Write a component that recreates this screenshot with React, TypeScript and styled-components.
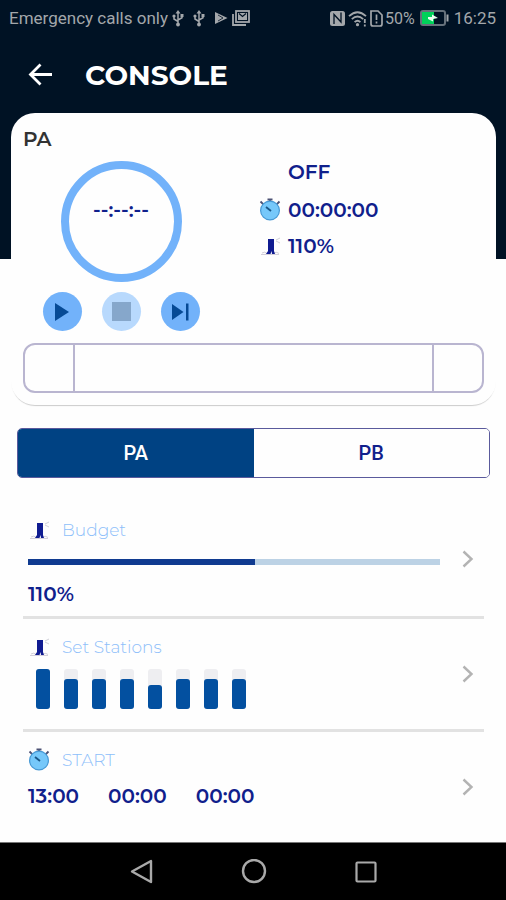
import React, { useState } from "react";
import styled, { createGlobalStyle } from "styled-components";

const color = {
  ink: "#001224",
  status: "#a3a7ab",
  sky: "#72b2fa",
  skyText: "#8ec0fa",
  navy: "#10208c",
  deep: "#004283",
  bar: "#0350a0",
  outline: "#b9b5d0",
  rule: "#e2e2e2",
};

const brandFont = `Montserrat, Inter, "Open Sans", sans-serif`;

const GlobalStyle = createGlobalStyle`
  *, *::before, *::after { box-sizing: border-box; }
  body { margin: 0; background: #fff; font-family: ${brandFont}; }
  button { font: inherit; color: inherit; border: 0; padding: 0; background: none; cursor: pointer; }
  svg { display: block; flex: none; }
`;

const Page = styled.div`
  display: flex;
  flex-direction: column;
  min-height: 100vh;
  background: linear-gradient(${color.ink} 259px, #fefefe 259px);
`;

const StatusBar = styled.div`
  display: flex;
  justify-content: space-between;
  align-items: center;
  height: 36px;
  padding: 0 10px 0 9px;
  color: ${color.status};
  font-family: Roboto, sans-serif;
  font-size: 17px;
`;

const StatusGroup = styled.div<{ $gap: number }>`
  display: flex;
  align-items: center;
  gap: ${(p) => p.$gap}px;
  white-space: nowrap;
`;

const BatteryText = styled.span`
  font-size: 16px;
`;

const AppBar = styled.header`
  display: flex;
  align-items: center;
  gap: 32px;
  height: 77px;
  padding: 0 27px;
  color: #fff;
`;

const Title = styled.h1`
  margin: 0;
  font-size: 28px;
  line-height: 32px;
  font-weight: 700;
`;

const Card = styled.section`
  margin: 0 10px 0 11px;
  padding: 14px 12px 12px;
  border-radius: 24px;
  background: #fefefe;
  box-shadow: 0 2px 1px -1px rgba(0, 0, 0, 0.2);
`;

const CardTitle = styled.h2`
  margin: 0 0 10px;
  color: #333;
  font-size: 20px;
  line-height: 24px;
  font-weight: 600;
`;

const Overview = styled.div`
  display: grid;
  grid-template-columns: 196px 1fr;
  column-gap: 40px;
`;

const Dial = styled.div`
  display: flex;
  justify-content: center;
  justify-self: center;
  width: 121px;
  height: 121px;
  padding-top: 29px;
  border: 8px solid ${color.sky};
  border-radius: 50%;
  color: ${color.navy};
  font-size: 20px;
  line-height: 24px;
  font-weight: 600;
`;

const Readouts = styled.div`
  display: flex;
  flex-direction: column;
  gap: 15px;
`;

const Readout = styled.div`
  display: grid;
  grid-template-columns: 20px 1fr;
  column-gap: 9px;
  align-items: center;
  height: 22px;
  color: ${color.navy};
  font-size: 20px;
  line-height: 22px;
  font-weight: 600;
`;

const ReadoutValue = styled.span`
  grid-column: 2;
`;

const Controls = styled.div`
  display: flex;
  justify-content: center;
  gap: 20px;
  width: 196px;
  margin: 10px 0 12px;
`;

const RoundButton = styled.button`
  display: grid;
  place-items: center;
  width: 39px;
  height: 39px;
  border-radius: 50%;
  background: ${color.sky};
  color: #064a95;

  &:disabled {
    background: #b8d9fd;
    color: #86a7cb;
    cursor: default;
  }
`;

const Track = styled.div`
  display: grid;
  grid-template-columns: 48px 1fr 50px;
  height: 50px;
  border: 2px solid ${color.outline};
  border-radius: 12px;
`;

const TrackCell = styled.div`
  & + & {
    border-left: 2px solid ${color.outline};
  }
`;

const Segments = styled.div`
  display: grid;
  grid-template-columns: 1fr 1fr;
  height: 50px;
  margin: 23px 16px 24px 17px;
  border: 1px solid #5a5a9c;
  border-radius: 5px;
  overflow: hidden;
`;

const Segment = styled.button<{ $active: boolean }>`
  && {
    background: ${(p) => (p.$active ? color.deep : "#fefefe")};
    color: ${(p) => (p.$active ? "#fff" : color.navy)};
    font-family: Roboto, sans-serif;
    font-size: 20px;
    font-weight: 500;
  }
`;

const Settings = styled.div`
  display: flex;
  flex-direction: column;
  flex: 1;
  margin: 0 22px 0 23px;
`;

const SettingRow = styled.button`
  && {
    display: grid;
    grid-template-columns: 1fr 32px;
    column-gap: 12px;
    align-items: center;
    padding-left: 5px;
    text-align: left;
  }

  & + & {
    border-top: 3px solid ${color.rule};
  }
`;

const SettingBody = styled.span<{ $gap: number; $bottom: number }>`
  display: flex;
  flex-direction: column;
  gap: ${(p) => p.$gap}px;
  padding: 16px 0 ${(p) => p.$bottom}px;
`;

const SettingLabel = styled.span`
  display: grid;
  grid-template-columns: 22px 1fr;
  column-gap: 12px;
  align-items: center;
  color: ${color.skyText};
  font-size: 17px;
  line-height: 24px;
  font-weight: 300;
`;

const Meter = styled.span`
  display: block;
  height: 6px;
  background: #bcd2e5;
`;

const MeterFill = styled.span`
  display: block;
  height: 100%;
  background: #103b90;
`;

const Values = styled.span`
  display: flex;
  gap: 29px;
  color: ${color.navy};
  font-size: 20px;
  line-height: 24px;
  font-weight: 600;
`;

const Stations = styled.span`
  display: flex;
  gap: 14px;
  height: 40px;
  padding-left: 8px;
`;

const Station = styled.span`
  display: flex;
  align-items: flex-end;
  width: 14px;
  border-radius: 3px;
  background: #eeeef1;
`;

const StationLevel = styled.span`
  width: 100%;
  border-radius: 3px;
  background: ${color.bar};
`;

const NavBar = styled.nav`
  display: flex;
  justify-content: center;
  align-items: center;
  gap: 84px;
  height: 58px;
  padding-left: 2px;
  border-top: 1px solid #777;
  background: #000;
  color: #a9a9a9;
`;

const NavButton = styled.button`
  display: grid;
  place-items: center;
  width: 28px;
  height: 28px;
`;

const UsbIcon = () => (
  <svg width="12" height="17" viewBox="0 0 12 17" fill="none" stroke="currentColor" strokeWidth="1.5">
    <path d="M6 2v12M6 11.5 2 9V6.5M6 10l4-2.3V5" />
    <path d="M6 0 8.5 3.5h-5z" fill="currentColor" stroke="none" />
    <circle cx="6" cy="14.5" r="1.9" fill="currentColor" stroke="none" />
    <circle cx="2" cy="6" r="1.6" fill="currentColor" stroke="none" />
    <path d="M8.5 4h3v3h-3z" fill="currentColor" stroke="none" />
  </svg>
);

const StoreIcon = () => (
  <svg width="14" height="14" viewBox="0 0 14 14">
    <path d="M1 1v12L13.5 7z" fill="currentColor" />
    <path d="m4 4 5 3-5 3" stroke={color.ink} strokeWidth="0.8" fill="none" />
  </svg>
);

const GalleryIcon = () => (
  <svg width="18" height="16" viewBox="0 0 18 16" fill="none" stroke="currentColor" strokeWidth="1.8">
    <path d="M1 4v11h13" />
    <rect x="4" y="1" width="13" height="11" />
    <path d="M6 10V3h9v7z" fill="currentColor" stroke="none" />
    <path d="m7 3.5 3.5 3 3.5-3" stroke={color.ink} strokeWidth="1.2" />
  </svg>
);

const NfcIcon = () => (
  <svg width="17" height="17" viewBox="0 0 17 17">
    <rect x="1" y="1" width="15" height="15" rx="2.5" fill="currentColor" />
    <path d="M5 14V4.5L12 12V2.5" stroke={color.ink} strokeWidth="1.3" fill="none" />
  </svg>
);

const WifiIcon = () => (
  <svg width="20" height="17" viewBox="0 0 20 17" fill="none" stroke="currentColor" strokeWidth="1.8">
    <path d="M1 6.2q8.5-8 17 0M3.8 9.2q5.7-5.4 11.4 0M6.6 12.2q2.9-2.8 5.8 0" />
    <circle cx="9.5" cy="14.7" r="1.6" fill="currentColor" stroke="none" />
    <path d="M16.8 9v4M16.8 14.5v2" />
  </svg>
);

const SimIcon = () => (
  <svg width="13" height="17" viewBox="0 0 13 17" fill="none" stroke="currentColor" strokeWidth="1.7">
    <path d="M1 1h7l4 4v9q0 2-2 2H3q-2 0-2-2z" />
    <path d="M6.5 4.5V10M6.5 11.5v2" />
  </svg>
);

const BatteryIcon = () => (
  <svg width="29" height="16" viewBox="0 0 29 16">
    <rect x="1" y="1" width="24" height="14" rx="2" fill="none" stroke="#66717b" strokeWidth="2" />
    <path d="M27.5 4.5v7" stroke="currentColor" strokeWidth="2" />
    <path d="M2 2h12v12H2z" fill="#00d15a" />
    <path d="M8 7h4V4.5L18 8l-5 1v2.5L8 9z" fill="#e9fff1" />
  </svg>
);

const BackIcon = () => (
  <svg width="26" height="26" viewBox="0 0 26 26" fill="none" stroke="currentColor" strokeWidth="2.8">
    <path d="M25 12.5H3.5M13.5 2.5l-10 10 10 10" />
  </svg>
);

const StopwatchIcon = () => (
  <svg width="22" height="24" viewBox="0 0 22 24">
    <path d="M8.5 1.5h5M11 2v3M1.5 3.5l3 3M20.5 3.5l-3 3" stroke="#4c5275" strokeWidth="1.8" />
    <circle cx="11" cy="12.5" r="9.4" fill="#76c8fa" stroke="#4799d5" strokeWidth="1.2" />
    <path d="m7 9 5 4" stroke="#195787" strokeWidth="1.8" />
  </svg>
);

const SprinklerIcon = () => (
  <svg width="22" height="20" viewBox="0 0 22 20">
    <path d="M3 17q3-2 5 .5M15 17q3-1.5 5 .5M2 18.5h18" stroke="#d3cfda" fill="none" />
    <path d="M9 3h6v12l1 3h-3l-.5-3-1 3H7l2-3z" fill="#101c91" />
    <path d="m17 4 4-2M17 5l4 2" stroke="#d0d0d8" strokeWidth="1" />
  </svg>
);

const PlayIcon = () => (
  <svg width="16" height="20" viewBox="0 0 16 20"><path d="M1 1v18l14-9z" fill="currentColor" /></svg>
);

const StopIcon = () => (
  <svg width="19" height="19" viewBox="0 0 19 19"><path d="M0 0h19v19H0z" fill="currentColor" /></svg>
);

const SkipIcon = () => (
  <svg width="18" height="18" viewBox="0 0 18 18">
    <path d="M1 1v16L12.5 9zM15 .5h2.5v17H15z" fill="currentColor" />
  </svg>
);

const Chevron = () => (
  <svg width="32" height="20" viewBox="0 0 32 20" fill="none" stroke="#b3b3b3" strokeWidth="2.4">
    <path d="m11.5 2.5 8 7.5-8 7.5" />
  </svg>
);

const stationLevels = [100, 75, 75, 75, 60, 75, 75, 75];
const startTimes = ["13:00", "00:00", "00:00"];
const programs = ["PA", "PB"];

export default function App() {
  const [program, setProgram] = useState("PA");

  return (
    <>
      <GlobalStyle />
      <Page>
        <StatusBar>
          <StatusGroup $gap={4}>
            <span>Emergency calls only</span>
            <StatusGroup $gap={9}>
              <UsbIcon />
              <UsbIcon />
              <StatusGroup $gap={4}>
                <StoreIcon />
                <GalleryIcon />
              </StatusGroup>
            </StatusGroup>
          </StatusGroup>
          <StatusGroup $gap={5}>
            <StatusGroup $gap={2}>
              <NfcIcon />
              <WifiIcon />
              <SimIcon />
              <BatteryText>50%</BatteryText>
            </StatusGroup>
            <BatteryIcon />
            <span>16:25</span>
          </StatusGroup>
        </StatusBar>

        <AppBar>
          <button type="button" aria-label="Back"><BackIcon /></button>
          <Title>CONSOLE</Title>
        </AppBar>

        <Card>
          <CardTitle>PA</CardTitle>
          <Overview>
            <Dial>--:--:--</Dial>
            <Readouts>
              <Readout><ReadoutValue>OFF</ReadoutValue></Readout>
              <Readout><StopwatchIcon /><ReadoutValue>00:00:00</ReadoutValue></Readout>
              <Readout><SprinklerIcon /><ReadoutValue>110%</ReadoutValue></Readout>
            </Readouts>
          </Overview>
          <Controls>
            <RoundButton type="button" aria-label="Start"><PlayIcon /></RoundButton>
            <RoundButton type="button" aria-label="Stop" disabled><StopIcon /></RoundButton>
            <RoundButton type="button" aria-label="Next station"><SkipIcon /></RoundButton>
          </Controls>
          <Track>
            <TrackCell />
            <TrackCell />
            <TrackCell />
          </Track>
        </Card>

        <Segments>
          {programs.map((name) => (
            <Segment
              key={name}
              type="button"
              $active={name === program}
              aria-pressed={name === program}
              onClick={() => setProgram(name)}
            >
              {name}
            </Segment>
          ))}
        </Segments>

        <Settings>
          <SettingRow type="button">
            <SettingBody $gap={17} $bottom={10}>
              <SettingLabel><SprinklerIcon />Budget</SettingLabel>
              <Meter><MeterFill style={{ width: "55%" }} /></Meter>
              <Values><span>110%</span></Values>
            </SettingBody>
            <Chevron />
          </SettingRow>
          <SettingRow type="button">
            <SettingBody $gap={10} $bottom={20}>
              <SettingLabel><SprinklerIcon />Set Stations</SettingLabel>
              <Stations>
                {stationLevels.map((level, i) => (
                  <Station key={i}><StationLevel style={{ height: `${level}%` }} /></Station>
                ))}
              </Stations>
            </SettingBody>
            <Chevron />
          </SettingRow>
          <SettingRow type="button">
            <SettingBody $gap={12} $bottom={33}>
              <SettingLabel><StopwatchIcon />START</SettingLabel>
              <Values>{startTimes.map((time, i) => <span key={i}>{time}</span>)}</Values>
            </SettingBody>
            <Chevron />
          </SettingRow>
        </Settings>

        <NavBar>
          <NavButton type="button" aria-label="Back">
            <svg width="24" height="26" viewBox="0 0 24 26" fill="none" stroke="currentColor" strokeWidth="2.4">
              <path d="M21 2v21L2 12.5z" strokeLinejoin="round" />
            </svg>
          </NavButton>
          <NavButton type="button" aria-label="Home">
            <svg width="26" height="26" viewBox="0 0 26 26" fill="none" stroke="currentColor" strokeWidth="2.4">
              <circle cx="13" cy="12" r="11" />
            </svg>
          </NavButton>
          <NavButton type="button" aria-label="Recent apps">
            <svg width="22" height="22" viewBox="0 0 22 22" fill="none" stroke="currentColor" strokeWidth="2.2">
              <rect x="1.5" y="1.5" width="19" height="19" rx="1" />
            </svg>
          </NavButton>
        </NavBar>
      </Page>
    </>
  );
}
